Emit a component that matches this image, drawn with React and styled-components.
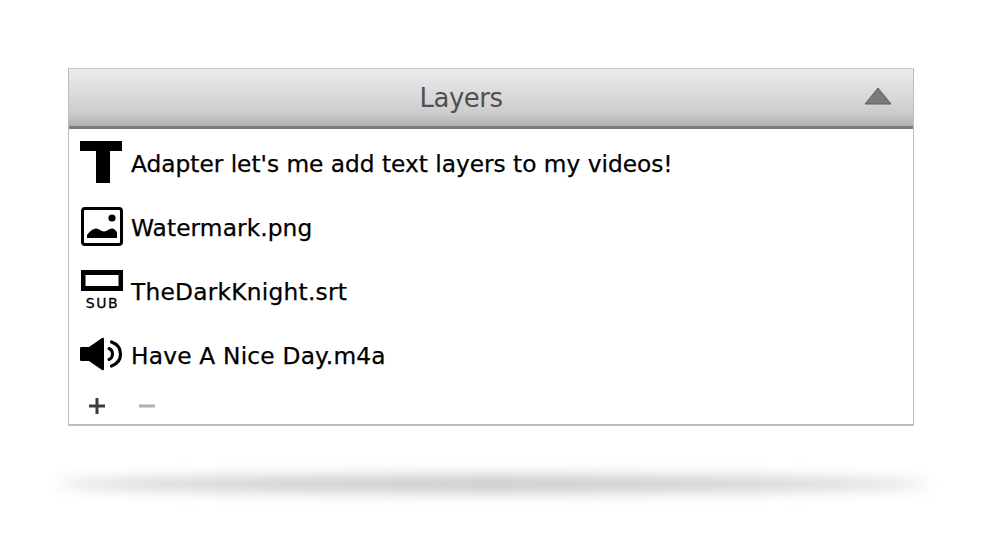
import React from 'react';
import styled, { createGlobalStyle } from 'styled-components';

const GlobalStyle = createGlobalStyle`
  html, body {
    margin: 0;
    padding: 0;
    background: #fff;
    overflow: hidden;
  }
`;

const Page = styled.div`
  width: 1000px;
  height: 551px;
  padding: 68px 86px 0 68px;
  box-sizing: border-box;
  font-family: "DejaVu Sans", "Liberation Sans", sans-serif;
`;

const Panel = styled.section`
  width: 846px;
  height: 358px;
  box-sizing: border-box;
  border: 1px solid #bcbcc2;
  border-top-color: #c8c8cc;
  border-bottom: 2px solid #bdbdc3;
  background: #fff;
  display: flex;
  flex-direction: column;
`;

const Header = styled.header`
  height: 60px;
  flex: none;
  box-sizing: border-box;
  display: flex;
  align-items: center;
  justify-content: center;
  position: relative;
  background: linear-gradient(#ebebeb 0%, #e0e0e0 30%, #cccccc 78%, #b4b4b4 97%);
  border-bottom: 3px solid #7d7d7d;
  padding-top: 1px;
`;

const Title = styled.h2`
  margin: 0 60px 0 0;
  font-size: 26px;
  font-weight: 400;
  color: #505050;
  letter-spacing: -0.5px;
`;

const Collapse = styled.svg`
  position: absolute;
  right: 21px;
  top: 18px;
`;

const List = styled.ul`
  list-style: none;
  margin: 0;
  padding: 3px 0 0 11px;
  display: flex;
  flex-direction: column;
`;

const Row = styled.li`
  height: 64px;
  display: flex;
  align-items: center;
  gap: 8px;
`;

const IconBox = styled.span`
  width: 43px;
  height: 50px;
  padding-bottom: 4px;
  box-sizing: border-box;
  flex: none;
  display: flex;
  align-items: center;
  justify-content: center;
`;

const Label = styled.span`
  font-size: 23.3px;
  letter-spacing: ${(p) => p.$spacing}px;
  color: #000;
  -webkit-text-stroke: 0.25px #000;
  white-space: nowrap;
  margin-top: -1px;
`;

const Footer = styled.div`
  display: flex;
  align-items: center;
  gap: 32px;
  padding: 9px 0 0 19px;
`;

const SubText = styled.text`
  font-family: "DejaVu Sans", sans-serif;
  font-size: 14px;
  letter-spacing: 1.6px;
  stroke: #000;
  stroke-width: 0.3px;
`;

const FloorShadow = styled.div`
  width: 870px;
  height: 18px;
  margin: 49px 0 0 -10px;
  border-radius: 50%;
  background: linear-gradient(90deg, #d4d4d4, #c9c9c9 50%, #d6d6d6);
  filter: blur(7px);
`;

const TextIcon = () => (
  <svg width="43" height="44" viewBox="0 0 43 44">
    <path d="M0 1h42v10H30v32H16V11H0z" fill="#000" />
  </svg>
);

const ImageIcon = () => (
  <svg width="42" height="39" viewBox="0 0 42 39">
    <rect x="1.500" y="1.500" width="39" height="36" rx="2.500" fill="#fff" stroke="#000" strokeWidth="3" />
    <circle cx="31" cy="11" r="3.600" fill="#000" />
    <path d="M6 31v-3c3-4 6-6.500 9-6.500 3 0 5 3 8 3 3 0 5-3 8-3 2 0 4 2 5 4v5.500z" fill="#000" />
  </svg>
);

const SubtitleIcon = () => (
  <svg width="42" height="42" viewBox="0 0 42 42">
    <path d="M0 1h42v21H0zM4.500 6v11h33V6z" fill="#000" fillRule="evenodd" />
    <SubText x="21.500" y="39" textAnchor="middle">SUB</SubText>
  </svg>
);

const SpeakerIcon = () => (
  <svg width="43" height="34" viewBox="0 0 43 34">
    <path d="M0 11.500c0-1 .5-1.500 1.500-1.500H9L22 1c1-.6 2 0 2 1v30c0 1-1 1.600-2 1L9 24H1.500C.5 24 0 23.500 0 22.500z" fill="#000" />
    <path d="M29 11.500c2.500 1 3.500 3 3.500 5.500s-1 4.500-3.500 5.500" fill="none" stroke="#000" strokeWidth="3" strokeLinecap="round" />
    <path d="M31.500 5c5.500 2 9 6.500 9 12s-3.500 10-9 12" fill="none" stroke="#000" strokeWidth="3.200" strokeLinecap="round" />
  </svg>
);

const CollapseIcon = () => (
  <Collapse width="28" height="18" viewBox="0 0 28 18">
    <path d="M14 1 27 17H1z" fill="#7a7a7a" stroke="#5f5f5f" strokeWidth="1" strokeLinejoin="round" />
  </Collapse>
);

const SignIcon = ({ plus, color }) => (
  <svg width="18" height="18" viewBox="0 0 18 18">
    <rect x="1" y="7.500" width="16" height="3" fill={color} />
    {plus && <rect x="7.500" y="1" width="3" height="16" fill={color} />}
  </svg>
);

const layers = [
  { name: "Adapter let's me add text layers to my videos!", icon: <TextIcon />, spacing: -0.02 },
  { name: 'Watermark.png', icon: <ImageIcon />, spacing: 0.08 },
  { name: 'TheDarkKnight.srt', icon: <SubtitleIcon />, spacing: 0.24 },
  { name: 'Have A Nice Day.m4a', icon: <SpeakerIcon />, spacing: 0.2 },
];

const App = () => (
  <Page>
    <GlobalStyle />
    <Panel>
      <Header>
        <Title>Layers</Title>
        <CollapseIcon />
      </Header>
      <List>
        {layers.map((layer) => (
          <Row key={layer.name}>
            <IconBox>{layer.icon}</IconBox>
            <Label $spacing={layer.spacing}>{layer.name}</Label>
          </Row>
        ))}
      </List>
      <Footer>
        <SignIcon plus color="#3c3c3c" />
        <SignIcon color="#b0b0b0" />
      </Footer>
    </Panel>
    <FloorShadow />
  </Page>
);

export default App;
